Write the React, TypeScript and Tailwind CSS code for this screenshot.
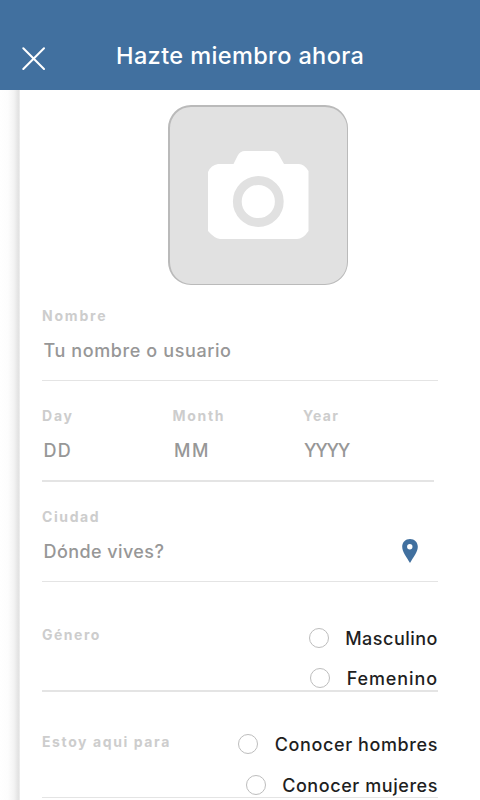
import React, { useState } from 'react';
import clsx from 'clsx';

const labelStyle = 'block whitespace-nowrap text-[14px] font-bold leading-5 text-[#cdcdcd]';
const valueStyle = 'block whitespace-nowrap text-[18px] font-[450] leading-6 text-[#979797]';

interface FieldProps {
  label: string;
  value: string;
  labelClass: string;
  valueClass: string;
}

const Field: React.FC<FieldProps> = ({ label, value, labelClass, valueClass }) => (
  <div>
    <span className={clsx(labelStyle, labelClass)}>{label}</span>
    <span className={clsx(valueStyle, 'mt-[13px] pl-[1.5px]', valueClass)}>{value}</span>
  </div>
);

interface OptionProps {
  label: string;
  checked: boolean;
  onSelect: () => void;
  className: string;
  textClass: string;
}

const Option: React.FC<OptionProps> = ({ label, checked, onSelect, className, textClass }) => (
  <button
    type="button"
    role="radio"
    aria-checked={checked}
    onClick={onSelect}
    className={clsx('flex h-6 items-center justify-between', className)}
  >
    <span
      className={clsx(
        'h-5 w-5 shrink-0 rounded-full border border-[#bdbdbd]',
        checked && 'bg-[#41709f]'
      )}
    />
    <span className={clsx('whitespace-nowrap pt-0.5 text-[18px] font-[450] leading-6 text-[#1f1f1f]', textClass)}>
      {label}
    </span>
  </button>
);

const CameraIcon = () => (
  <svg width="101" height="88" viewBox="0 0 101 88" fill="none" className="mb-0.5">
    <path
      d="M10 13H25.500L29.500 5Q32 0 37 0H64Q69 0 71.500 5L76 13H91Q96 13 100.500 20V80Q95 88 89 88H12Q6 87 0 80V21Q3 14 10 13Z"
      fill="white"
    />
    <circle cx="50.300" cy="50.500" r="21" stroke="#e1e1e1" strokeWidth="8.800" />
  </svg>
);

const PinIcon = () => (
  <svg width="16" height="24" viewBox="0 0 16 24">
    <path
      d="M8 0C3.500 0 .2 3.300 .2 7.800C.2 13.200 4.800 18.500 8 24C11.200 18.500 15.800 13.200 15.800 7.800C15.800 3.300 12.500 0 8 0Z"
      fill="#41709f"
    />
    <circle cx="7.800" cy="7.700" r="2.700" fill="white" />
  </svg>
);

export default function App() {
  const [gender, setGender] = useState('');
  const [lookingFor, setLookingFor] = useState('');

  return (
    <div className="flex h-[800px] w-[480px] flex-col overflow-hidden bg-white font-['Inter',sans-serif]">
      <header className="flex h-[90px] shrink-0 bg-[#41709f] pl-[22px]">
        <button type="button" aria-label="Cerrar" className="mt-[47px] h-[23px] w-[23px]">
          <svg width="23" height="23" viewBox="0 0 23 23" stroke="white" strokeWidth="2" strokeLinecap="round">
            <path d="M1.300 1.300L22 22M22 1.300L1.300 22" />
          </svg>
        </button>
        <h1 className="ml-[71px] mt-10 whitespace-nowrap text-[23.5px] font-medium leading-8 tracking-[0.39px] text-white">
          Hazte miembro ahora
        </h1>
      </header>

      <div className="flex min-h-0 flex-1">
        {/* Shadow of the sliding panel */}
        <div className="w-5 shrink-0 bg-[linear-gradient(to_right,#ffffff_0%,#fdfdfd_40%,#f3f3f3_70%,#e2e2e2_92%,#f0f0f0_100%)]" />

        <main className="w-[460px] pl-[22px] pr-[42px]">
          <button
            type="button"
            aria-label="Foto"
            className="ml-[126px] mt-[15px] flex h-[180px] w-[180px] items-center justify-center rounded-[23px] border border-t-2 border-l-2 border-[#bababa] bg-[#e1e1e1]"
          >
            <CameraIcon />
          </button>

          <section className="h-24 border-b border-[#e4e4e4] pt-[21px]">
            <Field label="Nombre" value="Tu nombre o usuario" labelClass="tracking-[1.8px]" valueClass="tracking-[0.6px]" />
          </section>

          <section className="mr-1 grid h-[101px] grid-cols-[130.5px_130.5px_1fr] border-b-2 border-[#e4e4e4] pt-[25px]">
            <Field label="Day" value="DD" labelClass="tracking-[1.8px]" valueClass="tracking-[1.2px]" />
            <Field label="Month" value="MM" labelClass="tracking-[1.7px]" valueClass="tracking-[1.5px]" />
            <Field label="Year" value="YYYY" labelClass="tracking-[1.3px]" valueClass="-ml-[0.5px] tracking-[-1.3px]" />
          </section>

          <section className="flex h-[100px] justify-between border-b border-[#e4e4e4] pt-[25px]">
            <Field label="Ciudad" value="Dónde vives?" labelClass="tracking-[1.6px]" valueClass="tracking-[0.42px]" />
            <div className="mr-5 mt-8">
              <PinIcon />
            </div>
          </section>

          <section className="flex h-[110px] justify-between border-b-2 border-[#e4e4e4] pt-[44px]">
            <span className={clsx(labelStyle, '-mt-px tracking-[1.5px]')}>Género</span>
            <div role="radiogroup" className="flex flex-col items-end gap-4">
              <Option label="Masculino" checked={gender === 'm'} onSelect={() => setGender('m')} className="w-[129px]" textClass="tracking-[0.5px]" />
              <Option label="Femenino" checked={gender === 'f'} onSelect={() => setGender('f')} className="w-[128px]" textClass="tracking-[0.9px]" />
            </div>
          </section>

          <section className="flex h-[106px] justify-between border-b border-[#e4e4e4] pt-[40px]">
            <span className={clsx(labelStyle, 'tracking-[1.6px]')}>Estoy aqui para</span>
            <div role="radiogroup" className="flex flex-col items-end gap-[17px]">
              <Option label="Conocer hombres" checked={lookingFor === 'h'} onSelect={() => setLookingFor('h')} className="w-[200px]" textClass="tracking-[0.6px]" />
              <Option label="Conocer mujeres" checked={lookingFor === 'm'} onSelect={() => setLookingFor('m')} className="w-[192px]" textClass="tracking-[0.57px]" />
            </div>
          </section>
        </main>
      </div>
    </div>
  );
}
